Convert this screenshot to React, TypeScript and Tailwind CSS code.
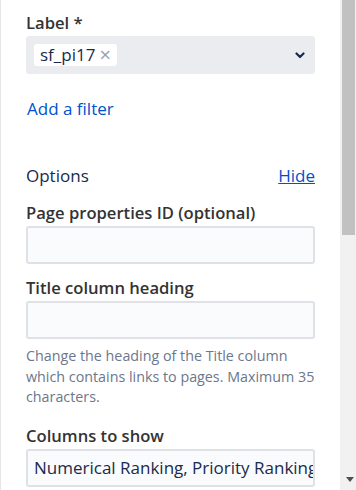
import React from "react";

const font = { fontFamily: "'Open Sans', 'Noto Sans', sans-serif" };

const TextField = ({ value }: { value?: string }) => (
  <div className="h-[38px] w-full rounded-[3px] border-2 border-[#dfe1e6] bg-[#fafbfc] px-[6px] flex items-center overflow-hidden">
    {value && (
      <span className="whitespace-nowrap text-[17px] leading-[20px] text-[#172b4d]">{value}</span>
    )}
  </div>
);

const FieldLabel = ({ children }: { children: React.ReactNode }) => (
  <div className="mb-[3px] text-[16.6px] leading-[20px] font-semibold text-[#333333]">{children}</div>
);

export default function App() {
  return (
    <div className="flex h-[490px] w-[356px] overflow-hidden bg-white" style={font}>
      {/* Panel */}
      <div className="min-w-0 flex-1 border-l border-[#e6e6e6] pl-[25px] pr-[25px] pt-[13px]">
        <FieldLabel>Label *</FieldLabel>

        {/* Label picker */}
        <div className="flex h-[38px] items-center justify-between rounded-[3px] bg-[#ebecf0] pl-[8px] pr-[10px]">
          <div className="flex h-[22px] items-center rounded-[3px] bg-white pl-[6px] pr-[6px] text-[17px] leading-[20px] text-[#172b4d]">
            sf_pi17
            <span className="ml-[4px] text-[20px] leading-[20px] text-[#97a0af]">×</span>
          </div>
          <svg width="10" height="7" viewBox="0 0 10 7">
            <path d="M1.5 1.5 L5 5 L8.5 1.5" fill="none" stroke="#172b4d" strokeWidth="2.2" strokeLinecap="round" strokeLinejoin="round" />
          </svg>
        </div>

        <div className="mt-[25px] pl-[1px] text-[17px] leading-[20px] text-[#0052cc]">Add a filter</div>

        {/* Options */}
        <div className="mt-[47px] flex items-center justify-between text-[17px] leading-[20px]">
          <span className="font-medium text-[#172b4d]">Options</span>
          <span className="text-[#0052cc] underline">Hide</span>
        </div>

        <div className="mt-[17px]">
          <FieldLabel>Page properties ID (optional)</FieldLabel>
          <TextField />
        </div>

        <div className="mt-[14px]">
          <FieldLabel>Title column heading</FieldLabel>
          <TextField />
          <p className="mt-[7px] text-[14.3px] leading-[20.5px] text-[#6b778c]">
            Change the heading of the Title column which contains links to pages. Maximum 35 characters.
          </p>
        </div>

        <div className="mt-[18px]">
          <FieldLabel>Columns to show</FieldLabel>
          <TextField value="Numerical Ranking, Priority Ranking" />
        </div>
      </div>

      {/* Scrollbar */}
      <div className="flex w-[16px] shrink-0 flex-col bg-[#f1f1f1]">
        <div className="ml-[2px] mr-[1px] h-[235px] bg-[#c1c1c1]" />
        <div className="flex-1" />
        <div className="flex h-[14px] items-start justify-center pl-[3px] pt-[1px]">
          <svg width="8" height="5" viewBox="0 0 8 5">
            <path d="M0 0 H8 L4 5 Z" fill="#505050" />
          </svg>
        </div>
      </div>
    </div>
  );
}
